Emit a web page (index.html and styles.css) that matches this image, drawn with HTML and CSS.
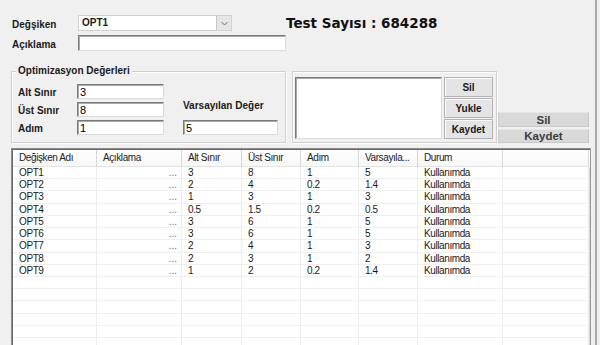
FILE: index.html
```html
<!DOCTYPE html>
<html lang="tr">
<head>
    <meta charset="UTF-8">
    <title>Optimizasyon</title>
    <link rel="stylesheet" href="styles.css">
</head>
<body>
    <div class="window">
        <div class="row row-top">
            <label class="lbl">Değşiken</label>
            <div class="combo">
                <span class="combo-text">OPT1</span>
                <span class="combo-btn">
                    <svg width="13" height="13" viewBox="0 0 13 13"><polyline points="3.5,5 6.5,8 9.5,5" fill="none" stroke="#707070" stroke-width="1"/></svg>
                </span>
            </div>
            <div class="test-count">Test Sayısı : 684288</div>
        </div>

        <div class="row row-desc">
            <label class="lbl">Açıklama</label>
            <input type="text" class="field field-wide" value="">
        </div>

        <div class="row row-groups">
            <div class="group opt-group">
                <span class="group-title">Optimizasyon Değerleri</span>
                <div class="opt-grid">
                    <label class="lbl opt-lbl">Alt Sınır</label>
                    <input type="text" class="field" value="3">
                    <label class="lbl opt-lbl row2">Üst Sınır</label>
                    <input type="text" class="field row2" value="8">
                    <label class="lbl opt-lbl row3">Adım</label>
                    <input type="text" class="field row3" value="1">
                    <label class="lbl default-lbl">Varsayılan Değer</label>
                    <input type="text" class="field default-field" value="5">
                </div>
            </div>

            <div class="group list-group">
                <div class="listbox"></div>
                <div class="list-buttons">
                    <button class="btn">Sil</button>
                    <button class="btn">Yukle</button>
                    <button class="btn">Kaydet</button>
                </div>
            </div>

            <div class="side-buttons">
                <button class="side-btn side-del">Sil</button>
                <button class="side-btn side-save">Kaydet</button>
            </div>
        </div>

        <div class="grid-wrap">
            <div class="grid-row grid-head">
                <span>Değişken Adı</span><span>Açıklama</span><span>Alt Sınır</span><span>Üst Sınır</span><span>Adım</span><span>Varsayıla...</span><span>Durum</span><span></span>
            </div>
            <div class="grid-row"><span>OPT1</span><span class="dots">...</span><span>3</span><span>8</span><span>1</span><span>5</span><span>Kullanımda</span><span></span></div>
            <div class="grid-row"><span>OPT2</span><span class="dots">...</span><span>2</span><span>4</span><span>0.2</span><span>1.4</span><span>Kullanımda</span><span></span></div>
            <div class="grid-row"><span>OPT3</span><span class="dots">...</span><span>1</span><span>3</span><span>1</span><span>3</span><span>Kullanımda</span><span></span></div>
            <div class="grid-row"><span>OPT4</span><span class="dots">...</span><span>0.5</span><span>1.5</span><span>0.2</span><span>0.5</span><span>Kullanımda</span><span></span></div>
            <div class="grid-row"><span>OPT5</span><span class="dots">...</span><span>3</span><span>6</span><span>1</span><span>5</span><span>Kullanımda</span><span></span></div>
            <div class="grid-row"><span>OPT6</span><span class="dots">...</span><span>3</span><span>6</span><span>1</span><span>5</span><span>Kullanımda</span><span></span></div>
            <div class="grid-row"><span>OPT7</span><span class="dots">...</span><span>2</span><span>4</span><span>1</span><span>3</span><span>Kullanımda</span><span></span></div>
            <div class="grid-row"><span>OPT8</span><span class="dots">...</span><span>2</span><span>3</span><span>1</span><span>2</span><span>Kullanımda</span><span></span></div>
            <div class="grid-row"><span>OPT9</span><span class="dots">...</span><span>1</span><span>2</span><span>0.2</span><span>1.4</span><span>Kullanımda</span><span></span></div>
            <div class="grid-row"><span></span><span></span><span></span><span></span><span></span><span></span><span></span><span></span></div>
            <div class="grid-row"><span></span><span></span><span></span><span></span><span></span><span></span><span></span><span></span></div>
            <div class="grid-row"><span></span><span></span><span></span><span></span><span></span><span></span><span></span><span></span></div>
            <div class="grid-row"><span></span><span></span><span></span><span></span><span></span><span></span><span></span><span></span></div>
            <div class="grid-row"><span></span><span></span><span></span><span></span><span></span><span></span><span></span><span></span></div>
            <div class="grid-row"><span></span><span></span><span></span><span></span><span></span><span></span><span></span><span></span></div>
            <div class="grid-row"><span></span><span></span><span></span><span></span><span></span><span></span><span></span><span></span></div>
        </div>
    </div>
</body>
</html>
```

FILE: styles.css
```css
body {
    margin: 0;
    padding: 0;
    background-color: #f0f0f0;
    font-family: "Liberation Sans", Arial, sans-serif;
    color: #1a1a1a;
    overflow: hidden;
}

.window {
    box-sizing: border-box;
    width: 597px;
    height: 345px;
    padding: 15px 0 0 11px;
    border-right: 2px solid #a8a8a8;
    overflow: hidden;
}

.row {
    display: flex;
    align-items: flex-start;
}

.lbl {
    font-size: 10px;
    font-weight: bold;
    line-height: 16px;
}

.row-top,
.row-desc {
    height: 16px;
}

.row-top .lbl,
.row-desc .lbl {
    width: 66px;
    padding: 2px 0 0 1px;
}

.row-desc {
    margin-top: 4px;
}

/* combo box */
.combo {
    box-sizing: border-box;
    width: 154px;
    height: 16px;
    border: 1px solid #d2d2d2;
    background: #fff;
    display: flex;
    justify-content: space-between;
}

.combo-text {
    font-size: 10px;
    font-weight: bold;
    line-height: 14px;
    padding-left: 3px;
}

.combo-btn {
    box-sizing: border-box;
    width: 15px;
    height: 14px;
    background: #e6e6e6;
    border-left: 1px solid #c6c6c6;
    display: flex;
    align-items: center;
    justify-content: center;
}

.test-count {
    margin-left: 54px;
    font-family: "DejaVu Sans", sans-serif;
    font-size: 13.5px;
    font-weight: bold;
    line-height: 16px;
    color: #111;
    white-space: nowrap;
}

/* text fields */
.field {
    box-sizing: border-box;
    width: 87px;
    height: 15px;
    margin: 0;
    padding: 0 0 0 2px;
    border: 1px solid;
    border-color: #7a7a7a #dcdcdc #dcdcdc #7a7a7a;
    box-shadow: inset 1px 1px 0 #a8a8a8;
    background: #fff;
    font-family: "Liberation Sans", Arial, sans-serif;
    font-size: 11px;
    color: #000;
    outline: none;
}

.field-wide {
    width: 208px;
    height: 16px;
}

/* group boxes */
.row-groups {
    margin-top: 20px;
}

.group {
    position: relative;
    box-sizing: border-box;
    height: 72px;
    border: 1px solid #cfcfcf;
    box-shadow: inset 1px 1px 0 #fff, 1px 1px 0 #fff;
}

.group-title {
    position: absolute;
    top: -7px;
    left: 4px;
    padding: 0 2px;
    background: #f0f0f0;
    font-size: 10px;
    font-weight: bold;
    line-height: 12px;
}

.opt-group {
    width: 275px;
    padding: 12px 0 0 6px;
}

.opt-grid {
    display: grid;
    grid-template-columns: 59px 87px 19px 95px;
    grid-template-rows: 15px 15px 15px;
    row-gap: 3px;
}

.opt-lbl {
    grid-column: 1;
    line-height: 15px;
    padding-top: 1px;
}

.opt-grid .field {
    grid-column: 2;
    grid-row: 1;
}

.opt-grid .row2 {
    grid-row: 2;
}

.opt-grid .row3 {
    grid-row: 3;
}

.opt-grid .default-lbl {
    grid-column: 4;
    grid-row: 1 / 3;
    align-self: end;
    line-height: 12px;
    padding-bottom: 5px;
    white-space: nowrap;
}

.opt-grid .default-field {
    grid-column: 4;
    grid-row: 3;
    width: 95px;
}

.list-group {
    width: 205px;
    margin-left: 6px;
    padding: 5px 0 0 2px;
    display: flex;
    gap: 2px;
}

.listbox {
    box-sizing: border-box;
    width: 147px;
    height: 62px;
    background: #fff;
    border: 1px solid;
    border-color: #7a7a7a #dcdcdc #dcdcdc #7a7a7a;
    box-shadow: inset 1px 1px 0 #a8a8a8;
}

.list-buttons {
    display: flex;
    flex-direction: column;
    gap: 1px;
}

.btn {
    box-sizing: border-box;
    width: 49px;
    height: 20px;
    margin: 0;
    padding: 0;
    border: 1px solid #b4b4b4;
    box-shadow: inset 1px 1px 0 #fafafa;
    background: #e4e4e4;
    font-family: "Liberation Sans", Arial, sans-serif;
    font-size: 10px;
    font-weight: bold;
    color: #1a1a1a;
}

.side-buttons {
    align-self: flex-end;
    margin-left: 1px;
    display: flex;
    flex-direction: column;
    gap: 2px;
}

.side-btn {
    box-sizing: border-box;
    width: 91px;
    margin: 0;
    padding: 0;
    border: 1px solid #c8c8c8;
    border-top-color: #e6e6e6;
    background: #d9d9d9;
    font-family: "Liberation Sans", Arial, sans-serif;
    font-size: 11.5px;
    font-weight: bold;
    line-height: 12px;
    color: #3c3c3c;
}

.side-del {
    height: 15px;
}

.side-save {
    height: 14px;
}

/* data grid */
.grid-wrap {
    box-sizing: border-box;
    width: 580px;
    height: 200px;
    margin-top: 5px;
    border: 1px solid #8c8c8c;
    border-right-color: #9a9a9a;
    box-shadow: inset 1px 1px 0 #6a6a6a, inset -1px 0 0 #d8d8d8;
    background: #fff;
    padding: 1px 0 0 1px;
    overflow: hidden;
}

.grid-row {
    display: grid;
    grid-template-columns: 84px 85px 60px 59px 58px 59px 85px 86px;
    height: 12.23px;
}

.grid-row span {
    box-sizing: border-box;
    border-right: 1px solid #ededed;
    border-bottom: 1px solid #efefef;
    padding-left: 6px;
    font-size: 10px;
    letter-spacing: -0.4px;
    line-height: 12px;
    color: #1a1a1a;
    white-space: nowrap;
    overflow: hidden;
}

.grid-head {
    height: 17px;
    background: linear-gradient(#ffffff, #f6f6f6);
}

.grid-head span {
    border-right: 1px solid #d8d8d8;
    border-bottom: 1px solid #e4e4e4;
    line-height: 16px;
    color: #222;
}

.grid-row .dots {
    text-align: right;
    padding: 0 4px 0 0;
    color: #6a6a6a;
    letter-spacing: 0;
}
```
